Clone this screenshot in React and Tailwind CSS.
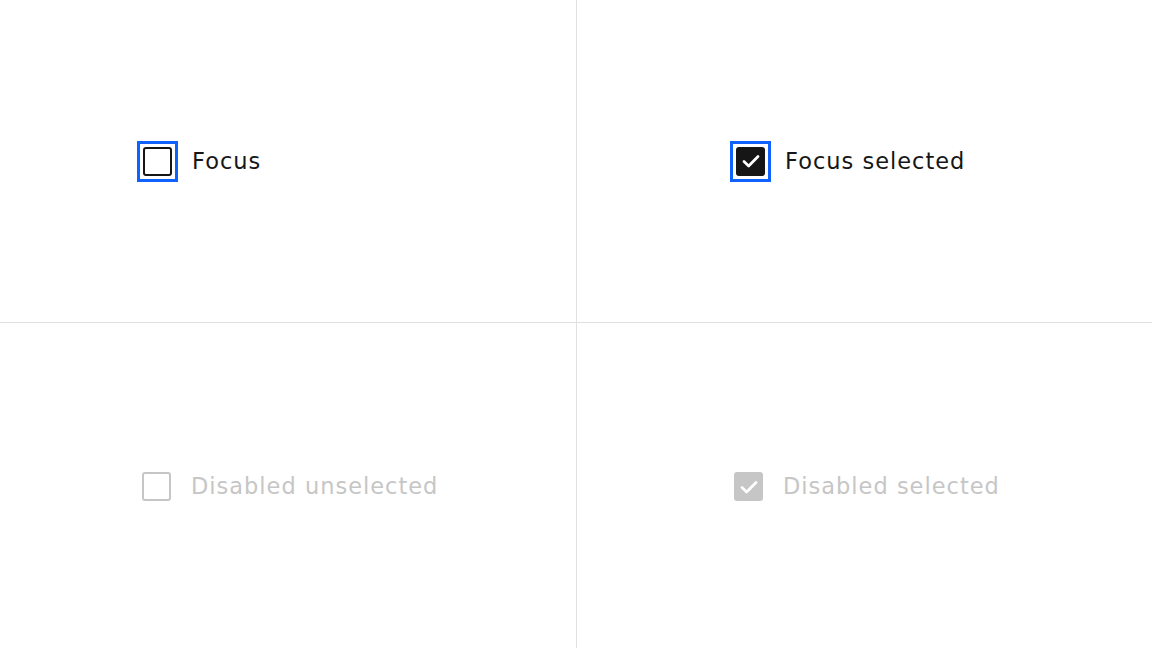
const CheckMark = () => (
  <svg viewBox="0 0 16 16" className="w-[22px] h-[22px]" fill="none">
    <path d="M2.9 8.4 6.3 11.6 13.1 4.7" stroke="white" strokeWidth="2" strokeLinecap="round" strokeLinejoin="round" />
  </svg>
);

const Box = ({ checked, disabled, focus }) => {
  const base = 'flex items-center justify-center w-[29px] h-[29px] rounded-[3px] shrink-0';
  let tone = 'border-2 border-[#161616] bg-white';
  if (checked && !disabled) tone = 'bg-[#161616]';
  if (disabled && !checked) tone = 'border-2 border-[#c6c6c6] bg-white';
  if (disabled && checked) tone = 'bg-[#c6c6c6]';
  const box = (
    <span className={`${base} ${tone}`}>
      {checked && <CheckMark />}
    </span>
  );
  if (!focus) return box;
  // square focus ring, kept out of the flow with a negative margin
  return <span className="flex -m-[6px] p-[3px] border-[3px] border-[#0f62fe]">{box}</span>;
};

const Item = ({ label, ...state }) => (
  <label className="flex items-center gap-[20px]">
    <Box {...state} />
    <span className={`text-[22.5px] leading-none tracking-[1px] ${state.disabled ? 'text-[#c6c6c6]' : 'text-[#161616]'}`}>{label}</span>
  </label>
);

export default function App() {
  return (
    <div className="w-[1152px] h-[648px] bg-white grid grid-cols-[577px_1fr] grid-rows-[323px_1fr] [font-family:'DejaVu_Sans',sans-serif]">
      <div className="flex items-center pl-[143px] border-r border-b border-[#e0e0e0]">
        <Item label="Focus" focus />
      </div>
      <div className="flex items-center pl-[159px] border-b border-[#e0e0e0]">
        <Item label="Focus selected" focus checked />
      </div>
      <div className="flex items-center pl-[142px] pt-[2px] border-r border-[#e0e0e0]">
        <Item label="Disabled unselected" disabled />
      </div>
      <div className="flex items-center pl-[157px] pt-[2px]">
        <Item label="Disabled selected" disabled checked />
      </div>
    </div>
  );
}
